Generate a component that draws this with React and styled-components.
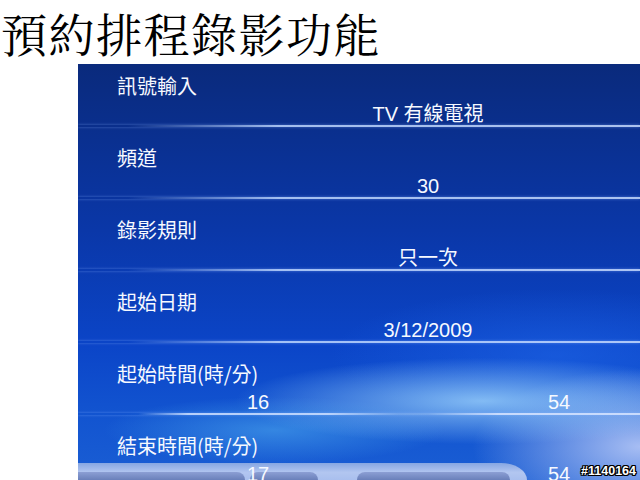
import React from 'react';
import styled, { createGlobalStyle } from 'styled-components';

const GlobalStyle = createGlobalStyle`
  html, body {
    margin: 0;
    padding: 0;
    width: 640px;
    height: 480px;
    overflow: hidden;
    background: #ffffff;
  }
`;

const Page = styled.div`
  position: relative;
  width: 640px;
  height: 480px;
  overflow: hidden;
  background: #ffffff;
`;

const Title = styled.h1`
  margin: 0;
  height: 64px;
  padding-left: 1px;
  font-family: "Noto Serif CJK TC", "Noto Sans CJK TC", serif;
  font-weight: 400;
  font-size: 46px;
  line-height: 64px;
  letter-spacing: 1.5px;
  color: #000;
`;

const Panel = styled.div`
  position: relative;
  margin-left: 78px;
  height: 416px;
  overflow: hidden;
  background:
    radial-gradient(ellipse 55% 13% at 72% 81%, rgba(150, 205, 250, 0.85), rgba(150, 205, 250, 0) 80%),
    radial-gradient(ellipse 35% 22% at 100% 92%, rgba(175, 195, 245, 0.95), rgba(175, 195, 245, 0) 85%),
    radial-gradient(ellipse 38% 10% at 35% 88%, rgba(70, 160, 235, 0.65), rgba(70, 160, 235, 0) 80%),
    radial-gradient(ellipse 50% 20% at 85% 70%, rgba(30, 100, 230, 0.6), rgba(30, 100, 230, 0) 80%),
    linear-gradient(to bottom, #0a2a7c 0%, #0a37a8 40%, #0b45c8 68%, #1254d0 84%, #1a5ed4 100%);
`;

const Rows = styled.div`
  position: relative;
  z-index: 1;
`;

const Row = styled.div`
  padding-top: 19px;
  &:first-child {
    padding-top: 10px;
  }
`;

const Label = styled.div`
  height: 24px;
  padding-left: 39px;
  font-family: "Noto Sans CJK TC", "Liberation Sans", sans-serif;
  font-size: 20px;
  line-height: 24px;
  color: #f6f9ff;
`;

const Value = styled.div`
  display: grid;
  grid-template-columns: ${p => (p.$split ? '120px 1fr 120px' : '1fr')};
  margin-top: 5px;
  height: 22px;
  padding-left: ${p => (p.$split ? '120px' : '138px')};
  padding-right: ${p => (p.$split ? '21px' : '0')};
  font-family: "Liberation Sans", "Noto Sans CJK TC", sans-serif;
  font-size: 20px;
  line-height: 22px;
  color: #f6f9ff;
  text-align: center;
`;

const Separator = styled.div`
  height: 2px;
  background: ${p =>
    p.$soft
      ? 'linear-gradient(to right, rgba(190,215,255,0) 60px, rgba(200,220,255,0.9) 110px, rgba(200,220,255,0.9) 250px, rgba(200,220,255,0.25) 320px, rgba(200,220,255,0.25) 350px, rgba(210,225,255,0.9) 420px, rgba(210,225,255,0.9) 100%)'
      : 'linear-gradient(to right, rgba(190,215,255,0) 50px, rgba(190,215,255,0.85) 200px, rgba(200,220,255,0.85) 100%)'};
  box-shadow: 0 0 3px rgba(140, 180, 255, 0.55);
`;

const Dock = styled.div`
  position: absolute;
  left: 0;
  bottom: 0;
  width: 449px;
  height: 17px;
  z-index: 0;
  display: flex;
  align-items: flex-end;
  gap: 5px;
  padding-right: 20px;
  box-sizing: border-box;
  border-top-right-radius: 26px 17px;
  background: linear-gradient(to bottom, #86a6e2 0%, #b2c6f0 55%, #a9bfee 100%);
`;

const Pill = styled.div`
  flex: 0 0 ${p => p.$w}px;
  margin-left: ${p => p.$gap || 0}px;
  height: 8px;
  border-radius: ${p => (p.$left ? '0 10px 0 0' : '10px 10px 0 0')};
  background: linear-gradient(to bottom, #8c9fd4 0%, #6a80ba 100%);
`;

const Watermark = styled.div`
  position: absolute;
  right: 4px;
  bottom: 2px;
  font-family: "Liberation Sans", sans-serif;
  font-weight: 700;
  font-size: 12.5px;
  line-height: 14px;
  color: #ffffff;
  text-shadow:
    1px 0 0 #000, -1px 0 0 #000, 0 1px 0 #000, 0 -1px 0 #000,
    1px 1px 0 #000, -1px -1px 0 #000, 1px -1px 0 #000, -1px 1px 0 #000;
`;

const fields = [
  { label: '訊號輸入', value: 'TV 有線電視' },
  { label: '頻道', value: '30' },
  { label: '錄影規則', value: '只一次' },
  { label: '起始日期', value: '3/12/2009' },
  { label: '起始時間(時/分)', split: ['16', '54'], soft: true },
  { label: '結束時間(時/分)', split: ['17', '54'] },
];

export default function App() {
  return (
    <Page>
      <GlobalStyle />
      <Title>預約排程錄影功能</Title>
      <Panel>
        <Dock>
          <Pill $w={167} $left />
          <Pill $w={68} />
          <Pill $w={153} $gap={34} />
        </Dock>
        <Rows>
          {fields.map(f => (
            <Row key={f.label}>
              <Label>{f.label}</Label>
              {f.split ? (
                <Value $split>
                  <span>{f.split[0]}</span>
                  <span />
                  <span>{f.split[1]}</span>
                </Value>
              ) : (
                <Value>{f.value}</Value>
              )}
              <Separator $soft={f.soft} />
            </Row>
          ))}
        </Rows>
      </Panel>
      <Watermark>#1140164</Watermark>
    </Page>
  );
}
